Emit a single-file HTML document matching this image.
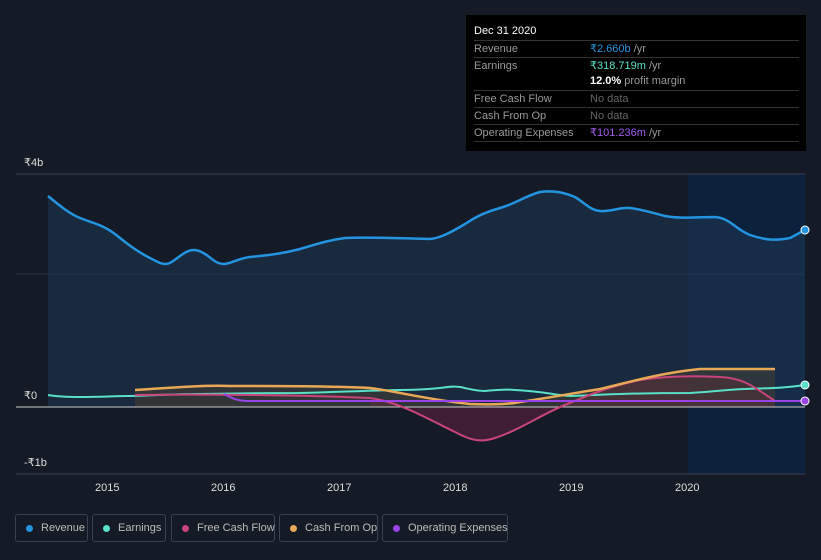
<!DOCTYPE html>
<html><head><meta charset="utf-8"><style>
body{margin:0;width:821px;height:560px;background:#151b26;font-family:"Liberation Sans",sans-serif;overflow:hidden;position:relative}
.tt{position:absolute;left:466px;top:15px;width:340px;height:136px;background:#000;color:#fff;font-size:11px}
.tt .h{position:absolute;left:8px;top:10px;font-size:11px}
.row{position:absolute;left:8px;width:325px;border-top:1px solid #333;height:16px;line-height:16px;color:#999}
.row span{position:absolute;left:116px}
.leg{position:absolute;top:514px;height:28px;border:1px solid #3a4150;border-radius:3px;color:#bbb;font-size:11px;line-height:26px;box-sizing:border-box;padding-left:25px;white-space:nowrap}
.leg i{position:absolute;left:10px;top:10px;width:7px;height:7px;border-radius:50%}
.ax{position:absolute;color:#ddd;font-size:11px}
</style></head><body>
<svg width="821" height="500" style="position:absolute;left:0;top:0">
<rect x="688" y="174" width="117" height="300" fill="#0c213b"/>
<line x1="16" y1="174" x2="805" y2="174" stroke="#3a4150"/>
<line x1="16" y1="274" x2="805" y2="274" stroke="#2a3140"/>
<line x1="16" y1="474" x2="805" y2="474" stroke="#3a4150"/>
<path d="M48,196 C60,206 70,214 80,218 C95,224 105,225 120,238 C135,250 145,256 160,263 C168,266 172,262 180,256 C188,250 195,247 205,254 C212,258 215,264 225,264 C235,262 240,258 250,257 C270,255 280,254 300,249 C320,243 330,240 345,238 C360,237 400,238 430,239 C440,238 450,233 465,224 C475,217 485,212 500,208 C515,204 525,196 540,192 C555,190 565,193 575,197 C585,203 590,210 600,211 C610,212 620,207 630,208 C640,209 650,212 665,216 C680,219 700,217 715,217 C730,218 735,229 750,235 C765,240 775,241 790,238 L805,230 L805,407 L48,407 Z" fill="#1d3a55" fill-opacity="0.5"/>
<path d="M48,196 C60,206 70,214 80,218 C95,224 105,225 120,238 C135,250 145,256 160,263 C168,266 172,262 180,256 C188,250 195,247 205,254 C212,258 215,264 225,264 C235,262 240,258 250,257 C270,255 280,254 300,249 C320,243 330,240 345,238 C360,237 400,238 430,239 C440,238 450,233 465,224 C475,217 485,212 500,208 C515,204 525,196 540,192 C555,190 565,193 575,197 C585,203 590,210 600,211 C610,212 620,207 630,208 C640,209 650,212 665,216 C680,219 700,217 715,217 C730,218 735,229 750,235 C765,240 775,241 790,238 L805,230" fill="none" stroke="#2394e0" stroke-width="2.5"/>
<path d="M370,398 C400,402 430,420 455,432 C470,440 480,443 495,438 C520,430 545,412 570,403 C600,390 620,384 640,380 C660,377 690,375 720,377 C745,378 755,388 775,401 L775,407 L370,407Z" fill="#5a2040" fill-opacity="0.6"/>
<path d="M135,390 C180,387 210,385 230,386 C280,386 330,386 370,388 C400,392 430,400 470,404 C495,405 510,404 520,402 C560,396 580,392 600,389 C630,382 660,373 700,369 L775,369 L775,407 L135,407Z" fill="#4a4030" fill-opacity="0.5"/>
<line x1="16" y1="407" x2="805" y2="407" stroke="#ccc"/>
<path d="M48,395 C60,397 70,397 80,397 C100,397 115,396 130,396 C160,395 180,394 200,394 C250,393 280,393 300,393 C340,392 380,390 400,390 C420,390 430,389 440,388 C448,387 452,386 460,387 C470,389 475,391 485,391 C495,390 505,389 515,390 C540,391 555,395 570,396 C600,395 610,394 620,394 C650,393 670,393 690,393 C720,391 735,389 745,389 C770,388 785,388 805,385" fill="none" stroke="#58e0c8" stroke-width="2"/>
<path d="M135,395 C200,394 300,395 370,398 C400,402 430,420 455,432 C470,440 480,443 495,438 C520,430 545,412 570,403 C600,390 620,384 640,380 C660,377 690,375 720,377 C745,378 755,388 775,401" fill="none" stroke="#c9437c" stroke-width="2"/>
<path d="M135,390 C180,387 210,385 230,386 C280,386 330,386 370,388 C400,392 430,400 470,404 C495,405 510,404 520,402 C560,396 580,392 600,389 C630,382 660,373 700,369 L775,369" fill="none" stroke="#e8a857" stroke-width="2.5"/>
<path d="M224,394 C232,398 236,401 250,401 L805,401" fill="none" stroke="#9a44e8" stroke-width="2"/>
<circle cx="805" cy="230" r="4" fill="#2394e0" stroke="#fff" stroke-width="1"/>
<circle cx="805" cy="385" r="4" fill="#58e0c8" stroke="#fff" stroke-width="1"/>
<circle cx="805" cy="401" r="4" fill="#9a44e8" stroke="#fff" stroke-width="1"/>
</svg>
<div class="ax" style="left:24px;top:156px">₹4b</div>
<div class="ax" style="left:24px;top:389px">₹0</div>
<div class="ax" style="left:24px;top:456px">-₹1b</div>
<div class="ax" style="left:95px;top:482px">2015</div>
<div class="ax" style="left:211px;top:482px">2016</div>
<div class="ax" style="left:327px;top:482px">2017</div>
<div class="ax" style="left:443px;top:482px">2018</div>
<div class="ax" style="left:559px;top:482px">2019</div>
<div class="ax" style="left:675px;top:482px">2020</div>
<div class="tt">
<div class="h">Dec 31 2020</div>
<div class="row" style="top:25px">Revenue<span><b style="color:#2394e0;font-weight:normal">₹2.660b</b> /yr</span></div>
<div class="row" style="top:42px">Earnings<span><b style="color:#58e0c8;font-weight:normal">₹318.719m</b> /yr</span></div>
<div class="row" style="top:58px;border:none"><span><b style="color:#fff">12.0%</b> profit margin</span></div>
<div class="row" style="top:75px">Free Cash Flow<span style="color:#666">No data</span></div>
<div class="row" style="top:92px">Cash From Op<span style="color:#666">No data</span></div>
<div class="row" style="top:109px">Operating Expenses<span><b style="color:#a25cf0;font-weight:normal">₹101.236m</b> /yr</span></div>
<div class="row" style="top:126px;height:0"></div>
</div>
<div class="leg" style="left:15px;width:73px"><i style="background:#2394e0"></i>Revenue</div>
<div class="leg" style="left:92px;width:74px"><i style="background:#58e0c8"></i>Earnings</div>
<div class="leg" style="left:171px;width:104px"><i style="background:#c9437c"></i>Free Cash Flow</div>
<div class="leg" style="left:279px;width:99px"><i style="background:#e8a857"></i>Cash From Op</div>
<div class="leg" style="left:382px;width:126px"><i style="background:#9a44e8"></i>Operating Expenses</div>
</body></html>
